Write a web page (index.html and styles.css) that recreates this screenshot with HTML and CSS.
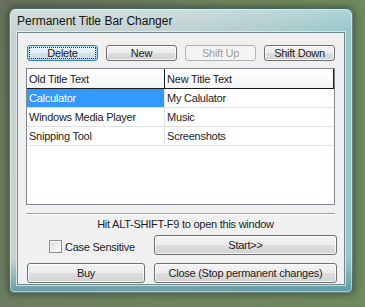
FILE: index.html
```html
<!DOCTYPE html>
<html>
<head>
<meta charset="utf-8">
<link rel="stylesheet" href="styles.css">
</head>
<body>
<div class="desktop">
  <div class="window">
    <div class="titlebar">Permanent Title Bar Changer</div>
    <div class="client">
      <div class="toolbar">
        <button class="btn default"><span class="focus">Delete</span></button>
        <button class="btn">New</button>
        <button class="btn disabled">Shift Up</button>
        <button class="btn">Shift Down</button>
      </div>
      <div class="list">
        <div class="head">
          <div class="hcell c1">Old Title Text</div>
          <div class="hcell c2">New Title Text</div>
        </div>
        <div class="row">
          <div class="cell c1 sel">Calculator</div>
          <div class="cell c2">My Calulator</div>
        </div>
        <div class="row">
          <div class="cell c1">Windows Media Player</div>
          <div class="cell c2">Music</div>
        </div>
        <div class="row">
          <div class="cell c1">Snipping Tool</div>
          <div class="cell c2">Screenshots</div>
        </div>
      </div>
      <div class="separator"></div>
      <div class="hint">Hit ALT-SHIFT-F9 to open this window</div>
      <div class="grid2 optrow">
        <label class="check"><span class="box"></span><span>Case Sensitive</span></label>
        <button class="btn wide">Start&gt;&gt;</button>
      </div>
      <div class="grid2 bottomrow">
        <button class="btn wide">Buy</button>
        <button class="btn wide">Close (Stop permanent changes)</button>
      </div>
    </div>
  </div>
</div>
</body>
</html>
```

FILE: styles.css
```css
html, body {
  margin: 0;
  padding: 0;
}
body {
  width: 365px;
  height: 307px;
  overflow: hidden;
  background: #6f8360;
  font-family: "Liberation Sans", Arial, sans-serif;
}
.desktop {
  width: 365px;
  height: 307px;
  padding-top: 8px;
  box-sizing: border-box;
  background:
    radial-gradient(ellipse at 0% 0%, #66705c 0%, rgba(102,112,92,0) 45%),
    linear-gradient(to right, #6d7c60, #6f8a5c);
}
.window {
  margin-left: 9px;
  width: 344px;
  height: 285px;
  box-sizing: border-box;
  padding: 0 7px 7px 7px;
  display: flex;
  flex-direction: column;
  border-radius: 7px 7px 5px 5px;
  border: 1px solid rgba(40, 60, 60, 0.55);
  background:
    linear-gradient(to bottom, rgba(255,255,255,0.25) 0, rgba(255,255,255,0) 24px),
    linear-gradient(to bottom, rgba(90,150,158,0) 88%, rgba(90,152,160,0.9) 100%),
    linear-gradient(to right, #c6d3d1 0%, #c0d2d0 45%, #a9cbcb 80%, #94c6ca 100%);
  box-shadow: 0 0 6px 2px rgba(30, 40, 25, 0.45), inset 0 0 0 1px rgba(255,255,255,0.45);
}
.titlebar {
  height: 23px;
  display: flex;
  align-items: center;
  padding-left: 0;
  font-size: 12px;
  color: #111;
}
.client {
  flex: 1;
  box-sizing: border-box;
  border: 1px solid #72888a;
  background: #f0f0f0;
  padding: 12px 9px 0 8px;
  display: flex;
  flex-direction: column;
  font-size: 11px;
  letter-spacing: -0.25px;
  color: #1c1c1c;
  box-shadow: 0 0 0 1px rgba(235, 245, 245, 0.7);
}
.btn {
  font-family: "Liberation Sans", Arial, sans-serif;
  font-size: 11px;
  letter-spacing: -0.25px;
  color: #1c1c1c;
  box-sizing: border-box;
  border: 1px solid #707070;
  border-radius: 3px;
  padding: 0;
  margin: 0;
  background: linear-gradient(to bottom, #f4f4f4 0%, #ececec 48%, #dedede 52%, #d2d2d2 100%);
  box-shadow: inset 0 0 0 1px rgba(255,255,255,0.75);
  display: flex;
  align-items: center;
  justify-content: center;
  line-height: 1;
}
.toolbar {
  display: flex;
  justify-content: space-between;
  padding-left: 1px;
  height: 16px;
}
.toolbar .btn {
  width: 71px;
  height: 16px;
}
.btn.default {
  border-color: #3c7fb1;
  background: linear-gradient(to bottom, #eef5fa 0%, #e4eef5 48%, #d4e3ee 52%, #c6d9e6 100%);
  box-shadow: inset 0 0 0 1px #a8d8f0;
}
.btn .focus {
  display: flex;
  align-items: center;
  justify-content: center;
  width: calc(100% - 2px);
  height: calc(100% - 2px);
  box-sizing: border-box;
  border: 1px dotted #333;
  line-height: 1;
}
.btn.disabled {
  border-color: #adb2b5;
  background: #f4f4f4;
  color: #a0a0a0;
  box-shadow: none;
}
.list {
  margin-top: 7px;
  height: 137px;
  box-sizing: border-box;
  border: 1px solid #828790;
  background: #fff;
}
.head, .row {
  display: flex;
}
.head {
  height: 20px;
  box-sizing: border-box;
  border-bottom: 1px solid #1a1a1a;
  background: linear-gradient(to bottom, #ffffff 0%, #fbfbfb 50%, #f2f3f4 100%);
}
.hcell {
  box-sizing: border-box;
  height: 19px;
  display: flex;
  align-items: center;
  padding-left: 2px;
  border-right: 1px solid #1a1a1a;
}
.c1 {
  width: 139px;
}
.c2 {
  width: 170px;
}
.row {
  height: 19px;
  box-sizing: border-box;
  border-bottom: 1px solid #e2e2e2;
}
.cell {
  box-sizing: border-box;
  height: 18px;
  display: flex;
  align-items: center;
  padding-left: 2px;
}
.cell.c1 {
  border-right: 1px solid #e2e2e2;
}
.cell.sel {
  background: #3399ff;
  color: #fff;
}
.separator {
  margin-top: 8px;
  height: 1px;
  background: #a0a0a0;
  border-bottom: 1px solid #ffffff;
}
.hint {
  height: 14px;
  margin-top: 2px;
  line-height: 14px;
  text-align: center;
  padding-left: 10px;
}
.grid2 {
  display: grid;
  grid-template-columns: 118px 183px;
  column-gap: 9px;
  padding-left: 1px;
  height: 20px;
}
.optrow {
  margin-top: 4px;
}
.bottomrow {
  margin-top: 8px;
}
.btn.wide {
  height: 20px;
  width: 100%;
}
.check {
  display: flex;
  align-items: center;
  padding-left: 22px;
  padding-top: 3px;
  gap: 3px;
}
.box {
  width: 13px;
  height: 13px;
  box-sizing: border-box;
  border: 1px solid #8e8f8f;
  background: linear-gradient(135deg, #d8d8d8 0%, #f0f0f0 60%, #fbfbfb 100%);
  box-shadow: inset 0 0 0 1px #f4f4f4;
}
```
